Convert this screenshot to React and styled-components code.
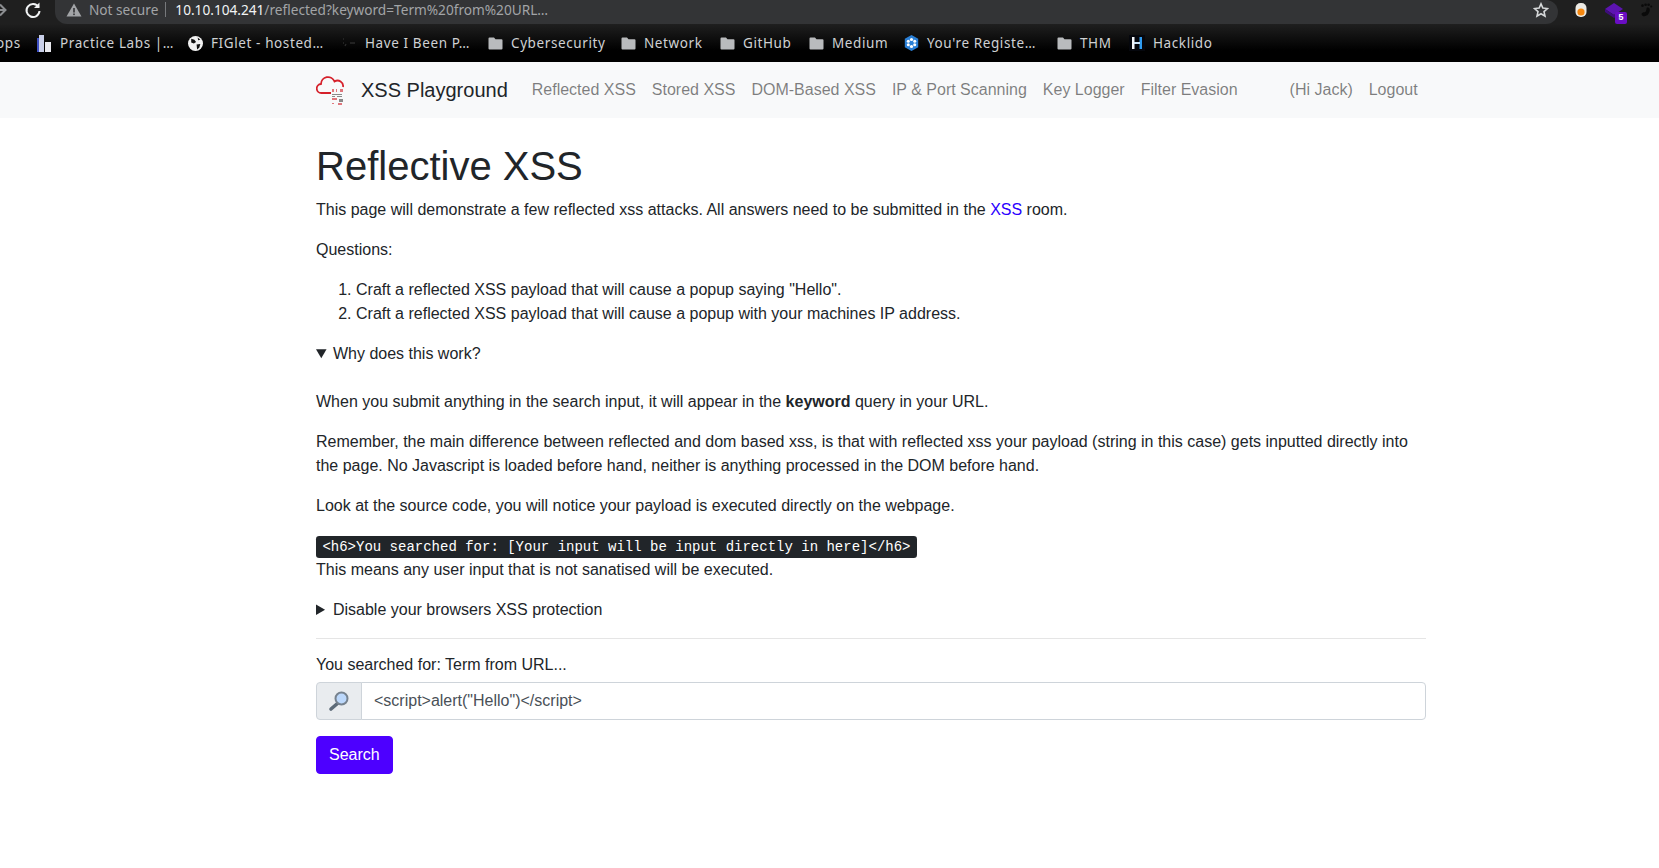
import React from 'react';
import styled, { createGlobalStyle } from 'styled-components';

const GlobalStyle = createGlobalStyle`
  * { box-sizing: border-box; }
  html, body { margin: 0; padding: 0; background: #fff; overflow: hidden; }
  body {
    font-family: "Liberation Sans", Arial, sans-serif;
    font-size: 16px;
    line-height: 24px;
    color: #212529;
  }
`;

const Toolbar = styled.div`
  display: flex;
  align-items: flex-start;
  height: 24px;
  background: #1f1f1f;
  font-family: "Noto Sans", sans-serif;
`;

const NavIcons = styled.div`
  display: flex;
  align-items: center;
  width: 64px;
  height: 20px;
  flex: none;
  gap: 15px;
  margin-left: -9px;
`;

const AddressBar = styled.div`
  display: flex;
  align-items: center;
  width: 1503px;
  height: 24px;
  flex: none;
  padding: 0 9px 4px 11px;
  background: #333436;
  border-radius: 0 14px 14px 14px;
  font-size: 13.65px;
  line-height: 20px;
`;

const NotSecure = styled.span`
  color: #a2a4a7;
  margin: 0 0 2px 7px;
  padding-right: 7px;
  border-right: 1px solid #77797c;
  line-height: 15px;
`;

const Host = styled.span`
  color: #f1f3f4;
  margin-left: 9px;
`;

const UrlPath = styled.span`
  color: #a2a4a7;
`;

const StarSlot = styled.div`
  margin-left: auto;
  display: flex;
`;

const Extensions = styled.div`
  display: flex;
  align-items: flex-start;
  height: 24px;
  padding-top: 3px;
  margin-left: 17px;
`;

const ExtBadgeWrap = styled.div`
  position: relative;
  width: 22px;
  height: 22px;
  margin: -1px 12px 0 18px;
`;

const ExtBadge = styled.span`
  position: absolute;
  right: 0;
  bottom: 0;
  width: 12px;
  height: 12px;
  background: #6a0dc4;
  border-radius: 2px;
  color: #fff;
  font: bold 9px/12px "Liberation Mono", monospace;
  text-align: center;
`;

const BookmarkBar = styled.div`
  display: flex;
  align-items: center;
  height: 38px;
  background: linear-gradient(#1f1f1f, #000 70%);
  font-family: "Noto Sans", sans-serif;
  font-size: 13.5px;
  letter-spacing: 0.6px;
  color: #cfd1d3;
  white-space: nowrap;
  overflow: hidden;
`;

const Bookmark = styled.div`
  display: flex;
  align-items: center;
  gap: 8px;
  flex: none;
  width: ${p => p.$w}px;
  margin-left: ${p => p.$ml || 0}px;
  height: 20px;
`;

const Navbar = styled.nav`
  display: flex;
  align-items: center;
  height: 56px;
  padding-left: 316px;
  background: #f8f9fa;
`;

const Brand = styled.a`
  display: flex;
  align-items: center;
  gap: 16px;
  margin-right: 16px;
  font-size: 20px;
  line-height: 30px;
  color: #212529;
`;

const NavLink = styled.a`
  padding: 8px;
  color: rgba(0, 0, 0, 0.5);
`;

const NavRight = styled.div`
  display: flex;
  margin-left: 36px;
`;

const Main = styled.main`
  width: 1110px;
  margin-left: 316px;
  padding-top: 24px;
`;

const Title = styled.h1`
  margin: 0 0 8px;
  font-size: 40px;
  font-weight: 500;
  line-height: 48px;
`;

const Para = styled.p`
  margin: 0 0 16px;
`;

const Link = styled.a`
  color: #2b00ff;
`;

const List = styled.ol`
  margin: 0 0 16px;
  padding-left: 40px;
`;

const Details = styled.details`
  margin-bottom: 16px;
`;

const Summary = styled.summary`
  cursor: pointer;
`;

const Spacer = styled.div`
  height: 24px;
`;

const KbdLine = styled.div`
  height: 24px;
`;

const Kbd = styled.kbd`
  padding: 3.2px 6.4px;
  font-family: "Liberation Mono", monospace;
  font-size: 14px;
  color: #fff;
  background: #212529;
  border-radius: 3.2px;
`;

const Rule = styled.hr`
  margin: 16px 0;
  border: 0;
  border-top: 1px solid rgba(0, 0, 0, 0.1);
`;

const Label = styled.div`
  margin-bottom: 5px;
  margin-top: -2px;
`;

const InputGroup = styled.div`
  display: flex;
  height: 38px;
  margin-bottom: 16px;
`;

const Prepend = styled.span`
  display: flex;
  align-items: center;
  justify-content: center;
  width: 46px;
  background: #e9ecef;
  border: 1px solid #ced4da;
  border-radius: 4px 0 0 4px;
`;

const Input = styled.input`
  flex: 1;
  margin-left: -1px;
  padding: 6px 12px;
  border: 1px solid #ced4da;
  border-radius: 0 4px 4px 0;
  font: inherit;
  color: #495057;
  outline: none;
`;

const SearchButton = styled.button`
  height: 38px;
  padding: 6px 12px;
  border: 1px solid #4d00ff;
  border-radius: 4px;
  background: #4d00ff;
  color: #fff;
  font: inherit;
`;

const FolderIcon = () => (
  <svg width="15" height="13" viewBox="0 0 15 13">
    <path d="M1.5 0.5h4.5l1.5 1.7h6a1 1 0 0 1 1 1v8.3a1 1 0 0 1-1 1h-12a1 1 0 0 1-1-1v-10a1 1 0 0 1 1-1z" fill="#b9bbbd" />
  </svg>
);

const bookmarks = [
  { label: 'Practice Labs |…', w: 151, ml: 17, icon: (
    <svg width="15" height="17" viewBox="0 0 15 17">
      <rect x="0" y="3" width="7" height="14" fill="#3f51c4" />
      <rect x="2" y="0" width="5" height="17" fill="#c9cfe8" />
      <rect x="8" y="7" width="6" height="10" fill="#e8e8ee" />
    </svg>
  ) },
  { label: 'FIGlet - hosted…', w: 153, icon: (
    <svg width="15" height="15" viewBox="0 0 14 14">
      <circle cx="7" cy="7" r="7" fill="#f2f2f2" />
      <path d="M3 2.5l3 1 1.500 2-2 1.500-2.500-1zM8 8l3.500-.5-1 3.500-2 1.500zM9 1.500l2.500 2-2 .5z" fill="#111" />
    </svg>
  ) },
  { label: 'Have I Been P…', w: 147, icon: (
    <svg width="16" height="14" viewBox="0 0 16 14">
      <path d="M2 3h1M2 7h1M4 10l1-2M9 7h5" stroke="#2b2b2b" strokeWidth="1.400" fill="none" />
    </svg>
  ) },
  { label: 'Cybersecurity', w: 133, icon: <FolderIcon /> },
  { label: 'Network', w: 99, icon: <FolderIcon /> },
  { label: 'GitHub', w: 89, icon: <FolderIcon /> },
  { label: 'Medium', w: 95, icon: <FolderIcon /> },
  { label: "You're Registe…", w: 153, icon: (
    <svg width="15" height="16" viewBox="0 0 15 16">
      <path d="M7.500 0l6.700 3.800v8.400L7.500 16 .8 12.200V3.800z" fill="#2a7fd6" />
      <g fill="#fff">
        <circle cx="7.500" cy="4.500" r="1.600" /><circle cx="7.500" cy="11.500" r="1.600" />
        <circle cx="4.300" cy="6.300" r="1.500" /><circle cx="10.700" cy="6.300" r="1.500" />
        <circle cx="4.300" cy="9.700" r="1.500" /><circle cx="10.700" cy="9.700" r="1.500" />
      </g>
    </svg>
  ) },
  { label: 'THM', w: 72, icon: <FolderIcon /> },
  { label: 'Hacklido', w: 100, icon: (
    <svg width="16" height="16" viewBox="0 0 16 16">
      <rect width="16" height="16" fill="#05070d" />
      <rect x="3" y="2" width="2.500" height="12" fill="#f4f7fb" />
      <rect x="10.500" y="2" width="2.500" height="12" fill="#2f9cf0" />
      <rect x="5" y="7" width="6" height="2" fill="#cfe6fa" />
    </svg>
  ) },
];

const navItems = ['Reflected XSS', 'Stored XSS', 'DOM-Based XSS', 'IP & Port Scanning', 'Key Logger', 'Filter Evasion'];

const CloudLogo = () => (
  <svg width="29" height="29" viewBox="0 0 29 29">
    <path d="M15 17H5.500A4.500 4.500 0 0 1 5 8 7 7 0 0 1 18.500 5.500 5.500 5.500 0 0 1 27 11" fill="none" stroke="#d5202a" strokeWidth="1.800" />
    <g fill="#e0767c">
      <rect x="16" y="13" width="2" height="3" /><rect x="20" y="13" width="1" height="3" />
      <rect x="24" y="13" width="3" height="3" /><rect x="16" y="22" width="5" height="2" />
      <rect x="22" y="27" width="4" height="2" /><rect x="16" y="27" width="2" height="1" />
    </g>
    <g fill="#8a8a8a">
      <rect x="16" y="18" width="10" height="1" /><rect x="16" y="20" width="3" height="1" />
      <rect x="21" y="20" width="5" height="1" /><rect x="23" y="23" width="4" height="3" />
    </g>
  </svg>
);

const MagnifierIcon = () => (
  <svg width="22" height="22" viewBox="0 0 22 22">
    <path d="M10 13l-7 6" stroke="#5d6b78" strokeWidth="3.600" strokeLinecap="round" />
    <circle cx="13.500" cy="8.500" r="6" fill="#bcd8fb" stroke="#76828e" strokeWidth="2" />
  </svg>
);

export default function App() {
  return (
    <>
      <GlobalStyle />
      <Toolbar>
        <NavIcons>
          <svg width="18" height="18" viewBox="0 0 18 18">
            <path d="M1 9h13M9 3.500L14.500 9 9 14.500" fill="none" stroke="#8b8d90" strokeWidth="2" />
          </svg>
          <svg width="18" height="18" viewBox="0 0 18 18">
            <path d="M14.500 6A6.500 6.500 0 1 0 15.500 10" fill="none" stroke="#f1f3f4" strokeWidth="2" />
            <path d="M15.500 1.500V7H10z" fill="#f1f3f4" />
          </svg>
        </NavIcons>
        <AddressBar>
          <svg width="16" height="14" viewBox="0 0 16 14">
            <path d="M8 0.500L15.500 13.500H.5z" fill="#a2a4a7" />
            <rect x="7.200" y="5" width="1.600" height="4.500" fill="#333436" />
            <rect x="7.200" y="10.500" width="1.600" height="1.600" fill="#333436" />
          </svg>
          <NotSecure>Not secure</NotSecure>
          <Host>10.10.104.241</Host>
          <UrlPath>/reflected?keyword=Term%20from%20URL…</UrlPath>
          <StarSlot>
            <svg width="16" height="16" viewBox="0 0 24 24">
              <path d="M12 2.800l2.800 6.300 6.900.7-5.200 4.600 1.500 6.800-6-3.500-6 3.500 1.500-6.800L2.300 9.800l6.900-.7z" fill="none" stroke="#d6d8da" strokeWidth="2.400" />
            </svg>
          </StarSlot>
        </AddressBar>
        <Extensions>
          <svg width="12" height="14" viewBox="0 0 12 14">
            <rect x="0.500" y="0" width="11" height="14" rx="5" fill="#eceae4" />
            <circle cx="6" cy="9" r="3.600" fill="#f5870f" />
          </svg>
          <ExtBadgeWrap>
            <svg width="18" height="20" viewBox="0 0 18 20">
              <path d="M9 1l9 6-9 6-9-6z" fill="#5c14b0" />
              <path d="M0 10l9 6 3-2v-3l-3 2-9-6z" fill="#3e0d7c" />
            </svg>
            <ExtBadge>5</ExtBadge>
          </ExtBadgeWrap>
          <svg width="14" height="14" viewBox="0 0 14 16">
            <g fill="#0a0a0a">
              <path d="M9 5c2 0 3 2 2 5s-3 5-6 5-4-3-2-4 3 0 4-2 0-4 2-4z" />
              <circle cx="3" cy="3" r="1.500" /><circle cx="6.500" cy="2" r="1.500" /><circle cx="10" cy="2" r="1.500" /><circle cx="13" cy="4" r="1.200" />
            </g>
          </svg>
        </Extensions>
      </Toolbar>
      <BookmarkBar>
        <Bookmark $w={24} $ml={-4}>ops</Bookmark>
        {bookmarks.map(b => (
          <Bookmark key={b.label} $w={b.w} $ml={b.ml}>
            {b.icon}
            <span>{b.label}</span>
          </Bookmark>
        ))}
      </BookmarkBar>
      <Navbar>
        <Brand>
          <CloudLogo />
          XSS Playground
        </Brand>
        {navItems.map(n => <NavLink key={n}>{n}</NavLink>)}
        <NavRight>
          <NavLink>(Hi Jack)</NavLink>
          <NavLink>Logout</NavLink>
        </NavRight>
      </Navbar>
      <Main>
        <Title>Reflective XSS</Title>
        <Para>
          This page will demonstrate a few reflected xss attacks. All answers need to be submitted in the <Link>XSS</Link> room.
        </Para>
        <Para>Questions:</Para>
        <List>
          <li>Craft a reflected XSS payload that will cause a popup saying "Hello".</li>
          <li>Craft a reflected XSS payload that will cause a popup with your machines IP address.</li>
        </List>
        <Details open>
          <Summary>Why does this work?</Summary>
          <Spacer />
          <Para>When you submit anything in the search input, it will appear in the <b>keyword</b> query in your URL.</Para>
          <Para>
            Remember, the main difference between reflected and dom based xss, is that with reflected xss your payload (string in this case) gets inputted directly into the page. No Javascript is loaded before hand, neither is anything processed in the DOM before hand.
          </Para>
          <Para>Look at the source code, you will notice your payload is executed directly on the webpage.</Para>
          <KbdLine><Kbd>{'<h6>You searched for: [Your input will be input directly in here]</h6>'}</Kbd></KbdLine>
          <div>This means any user input that is not sanatised will be executed.</div>
        </Details>
        <Details>
          <Summary>Disable your browsers XSS protection</Summary>
        </Details>
        <Rule />
        <Label>You searched for: Term from URL...</Label>
        <InputGroup>
          <Prepend><MagnifierIcon /></Prepend>
          <Input readOnly value={'<script>alert("Hello")</script>'} />
        </InputGroup>
        <SearchButton>Search</SearchButton>
      </Main>
    </>
  );
}
